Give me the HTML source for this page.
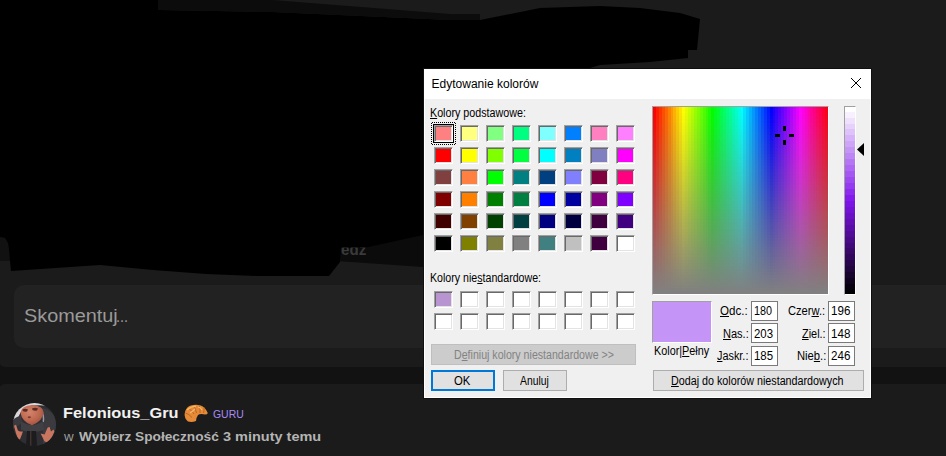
<!DOCTYPE html>
<html><head><meta charset="utf-8"><style>
html,body{margin:0;padding:0;}
body{width:946px;height:456px;overflow:hidden;position:relative;background:#121212;font-family:"Liberation Sans",sans-serif;}
.a{position:absolute;box-sizing:border-box;}
.t{position:absolute;white-space:pre;line-height:normal;}
u{text-decoration-thickness:1px;text-underline-offset:1px;}
.sw{position:absolute;width:17px;height:15px;border-style:solid;border-width:1px;border-color:#a0a0a0 #fff #fff #a0a0a0;box-shadow:inset 1px 1px 0 #696969,inset -1px -1px 0 #e3e3e3;}
.ed{position:absolute;box-sizing:border-box;width:27px;height:20px;border:1px solid #7a7a7a;background:#fff;}
.btn{position:absolute;box-sizing:border-box;height:21px;border:1px solid #adadad;background:#e1e1e1;}
</style></head><body>
<!-- web page -->
<div class="a" style="left:-1px;top:-20px;width:966px;height:387px;background:#1b1b1b;border-radius:6px"></div>
<div class="a" style="left:0;top:367px;width:946px;height:17px;background:#121212"></div>
<div class="a" style="left:-1px;top:384px;width:966px;height:100px;background:#1b1b1b;border-radius:6px"></div>
<div class="a" style="left:14px;top:285px;width:950px;height:63px;background:#222222;border-radius:10px"></div>

<svg class="a" style="left:0;top:0" width="946" height="456">
<polygon fill="#0b0b0b" points="338,246 423,232 423,267 337,261"/>
<polygon fill="#111" points="0,237 5,238 8,243 9,250 10,261 0,261"/>
</svg>
<div class="t" style="left:340.5px;top:240.37px;font-size:16.5px;color:#3a3a3a;font-weight:bold;transform:scaleX(0.9200);transform-origin:0 0;">edz</div>
<svg class="a" style="left:0;top:0" width="946" height="456">
<polygon fill="#000" points="0,0 158,0 158,10 272,12 450,20 480,20 540,8 600,6 640,8 680,13 700,19 697,50 688,50 688,58 650,62 600,65 590,68 423,68 423,235 366,247.6 341,247.6 340,262 329,276 258,276 206,274 153,270 100,265 11,271 10,261 9,250 8,243 5,238 0,237"/>
<polygon fill="#0c0c0c" points="158,0 272,0 450,14 480,14 480,20 450,20 272,12 158,10"/>
</svg>
<div class="t" style="left:23.6px;top:305.51px;font-size:18px;color:#9a9a9a;font-weight:normal;transform:scaleX(1.1024);transform-origin:0 0;">Skomentuj</div>
<div class="t" style="left:116.09px;top:307.52px;font-size:16px;color:#9a9a9a;font-weight:normal;transform:scaleX(0.9091);transform-origin:0 0;">...</div>
<div class="t" style="left:63.31px;top:403.93px;font-size:15px;color:#f2f2f2;font-weight:bold;transform:scaleX(1.0923);transform-origin:0 0;">Felonious_Gru</div>
<div class="t" style="left:213.21px;top:407.90px;font-size:10.5px;color:#a98cf8;font-weight:normal;transform:scaleX(0.9931);transform-origin:0 0;">GURU</div>
<div class="t" style="left:64.4px;top:428.58px;font-size:13.5px;color:#9d9d9d;font-weight:normal;transform:scaleX(0.9900);transform-origin:0 0;">w</div>
<div class="t" style="left:79.0px;top:428.58px;font-size:13.5px;color:#b4b4b4;font-weight:bold;transform:scaleX(1.0146);transform-origin:0 0;">Wybierz Społeczność</div>
<div class="t" style="left:222.53px;top:428.58px;font-size:13.5px;color:#b4b4b4;font-weight:bold;transform:scaleX(1.0733);transform-origin:0 0;">3 minuty temu</div>
<!-- user row -->
<svg class="a" style="left:13px;top:403px" width="43" height="43" viewBox="0 0 43 43">
<defs><clipPath id="cc"><circle cx="21.5" cy="21.5" r="21.5"/></clipPath>
<radialGradient id="hd" cx="0.4" cy="0.35" r="0.7"><stop offset="0" stop-color="#d2846a"/><stop offset="0.6" stop-color="#bf6850"/><stop offset="1" stop-color="#9a5040"/></radialGradient></defs>
<g clip-path="url(#cc)">
<rect width="43" height="43" fill="#2e2e33"/>
<path d="M0 0 L43 0 L43 4 Q32 1.5 19 2.5 Q9 3.5 5 15 L0 17Z" fill="#d8d8da"/>
<path d="M0 17 Q4 13 8 13 L9 20 L0 26Z" fill="#3a3a3f"/>
<path d="M30 5 Q40 8 43 16 L43 43 L30 43Z" fill="#3a3a3f"/>
<path d="M28.6 7 Q32 12 31 19 L29.5 19 Q30.5 12 27.5 8Z" fill="#9a9a9e"/>
<path d="M8 18 Q19 26 30 18 L31 27 Q19 31 8 27Z" fill="#3f3f44"/>
<path d="M14 28 L23 28 L24 43 L13 43Z" fill="#1c1c1f"/>
<path d="M17.8 28 L17.8 43" stroke="#6a4a40" stroke-width="0.7"/>
<path d="M7.4 9.5 Q8.5 2.5 19 2 Q30.6 2.5 30.6 9.5 Q30 18 19 22.2 Q9 19 7.4 9.5Z" fill="url(#hd)"/>
<path d="M9.5 6.5 Q12 5 15 6.5 L14 8.5 Q11.5 9 9.8 8Z" fill="#5a2a22"/>
<path d="M19 5.5 Q22 4 25 5.5 L24 7.5 Q21.5 8 19.5 7Z" fill="#5a2a22"/>
<ellipse cx="16.3" cy="14.3" rx="1.6" ry="1" fill="#7e3a2e"/>
<polygon points="1,22.7 3,21.7 4.9,27.6 6.9,28.6 9.9,28.6 8.9,31.6 6.9,36.5 4.9,35.5 3,30.6" fill="#c97560"/>
<polygon points="27.6,30.6 31.6,31.6 34.5,24.7 36.5,23.7 38,28.6 40.5,26.6 41.4,28.6 38.5,35.5 35.5,39.5 31.6,38.5" fill="#c97560"/>
</g></svg>

<svg class="a" style="left:184px;top:404px" width="24" height="18" viewBox="0 0 24 18">
<path d="M4 17.5 Q0.5 15 0.6 10 Q1.2 4 6 1.8 Q11 0.2 16 1.2 Q21 2.5 23.8 9 Q23.5 10.5 21 10.5 Q16 9.5 14 11 Q12.5 13 12 17 Q8 18.5 4 17.5Z" fill="#e48a38"/>
<path d="M1.5 9 Q5 10 8 13.5 M4 4 Q8 6.5 10 10 M9 1.5 Q12 4.5 12.5 9 M15 1.5 Q16.5 5 16 9 M20 3.5 Q20.5 6 19.5 9" stroke="#b8621f" stroke-width="0.9" fill="none"/>
<path d="M3 6 Q7 2.5 12 2.2 M6 9 Q9 7 11 5 M14 3 Q17 3.5 18 6" stroke="#f7b868" stroke-width="1.2" fill="none"/>
</svg>




<!-- dialog -->
<div class="a" style="left:423px;top:68px;width:449px;height:331px;border:1px solid #101010;background:#f0f0f0"></div>
<div class="a" style="left:424px;top:69px;width:447px;height:30px;background:#fff"></div>
<div class="a" style="left:424px;top:99px;width:1px;height:299px;background:#fff"></div>
<div class="a" style="left:870px;top:99px;width:1px;height:299px;background:#fff"></div>
<div class="a" style="left:424px;top:397px;width:447px;height:1px;background:#fff"></div>
<svg class="a" style="left:850px;top:77px" width="12" height="12"><path d="M1 1 L11 11 M11 1 L1 11" stroke="#000" stroke-width="1"/></svg>
<div class="sw" style="left:434px;top:125px;background:#FF8080"></div>
<div class="sw" style="left:460px;top:125px;background:#FFFF80"></div>
<div class="sw" style="left:486px;top:125px;background:#80FF80"></div>
<div class="sw" style="left:512px;top:125px;background:#00FF80"></div>
<div class="sw" style="left:538px;top:125px;background:#80FFFF"></div>
<div class="sw" style="left:564px;top:125px;background:#0080FF"></div>
<div class="sw" style="left:590px;top:125px;background:#FF80C0"></div>
<div class="sw" style="left:616px;top:125px;background:#FF80FF"></div>
<div class="sw" style="left:434px;top:147px;background:#FF0000"></div>
<div class="sw" style="left:460px;top:147px;background:#FFFF00"></div>
<div class="sw" style="left:486px;top:147px;background:#80FF00"></div>
<div class="sw" style="left:512px;top:147px;background:#00FF40"></div>
<div class="sw" style="left:538px;top:147px;background:#00FFFF"></div>
<div class="sw" style="left:564px;top:147px;background:#0080C0"></div>
<div class="sw" style="left:590px;top:147px;background:#8080C0"></div>
<div class="sw" style="left:616px;top:147px;background:#FF00FF"></div>
<div class="sw" style="left:434px;top:169px;background:#804040"></div>
<div class="sw" style="left:460px;top:169px;background:#FF8040"></div>
<div class="sw" style="left:486px;top:169px;background:#00FF00"></div>
<div class="sw" style="left:512px;top:169px;background:#008080"></div>
<div class="sw" style="left:538px;top:169px;background:#004080"></div>
<div class="sw" style="left:564px;top:169px;background:#8080FF"></div>
<div class="sw" style="left:590px;top:169px;background:#800040"></div>
<div class="sw" style="left:616px;top:169px;background:#FF0080"></div>
<div class="sw" style="left:434px;top:191px;background:#800000"></div>
<div class="sw" style="left:460px;top:191px;background:#FF8000"></div>
<div class="sw" style="left:486px;top:191px;background:#008000"></div>
<div class="sw" style="left:512px;top:191px;background:#008040"></div>
<div class="sw" style="left:538px;top:191px;background:#0000FF"></div>
<div class="sw" style="left:564px;top:191px;background:#0000A0"></div>
<div class="sw" style="left:590px;top:191px;background:#800080"></div>
<div class="sw" style="left:616px;top:191px;background:#8000FF"></div>
<div class="sw" style="left:434px;top:213px;background:#400000"></div>
<div class="sw" style="left:460px;top:213px;background:#804000"></div>
<div class="sw" style="left:486px;top:213px;background:#004000"></div>
<div class="sw" style="left:512px;top:213px;background:#004040"></div>
<div class="sw" style="left:538px;top:213px;background:#000080"></div>
<div class="sw" style="left:564px;top:213px;background:#000040"></div>
<div class="sw" style="left:590px;top:213px;background:#400040"></div>
<div class="sw" style="left:616px;top:213px;background:#400080"></div>
<div class="sw" style="left:434px;top:235px;background:#000000"></div>
<div class="sw" style="left:460px;top:235px;background:#808000"></div>
<div class="sw" style="left:486px;top:235px;background:#808040"></div>
<div class="sw" style="left:512px;top:235px;background:#808080"></div>
<div class="sw" style="left:538px;top:235px;background:#408080"></div>
<div class="sw" style="left:564px;top:235px;background:#C0C0C0"></div>
<div class="sw" style="left:590px;top:235px;background:#400040"></div>
<div class="sw" style="left:616px;top:235px;background:#FFFFFF"></div>
<div class="sw" style="left:434px;top:291px;background:#B894D0"></div>
<div class="sw" style="left:460px;top:291px;background:#FFFFFF"></div>
<div class="sw" style="left:486px;top:291px;background:#FFFFFF"></div>
<div class="sw" style="left:512px;top:291px;background:#FFFFFF"></div>
<div class="sw" style="left:538px;top:291px;background:#FFFFFF"></div>
<div class="sw" style="left:564px;top:291px;background:#FFFFFF"></div>
<div class="sw" style="left:590px;top:291px;background:#FFFFFF"></div>
<div class="sw" style="left:616px;top:291px;background:#FFFFFF"></div>
<div class="sw" style="left:434px;top:313px;background:#FFFFFF"></div>
<div class="sw" style="left:460px;top:313px;background:#FFFFFF"></div>
<div class="sw" style="left:486px;top:313px;background:#FFFFFF"></div>
<div class="sw" style="left:512px;top:313px;background:#FFFFFF"></div>
<div class="sw" style="left:538px;top:313px;background:#FFFFFF"></div>
<div class="sw" style="left:564px;top:313px;background:#FFFFFF"></div>
<div class="sw" style="left:590px;top:313px;background:#FFFFFF"></div>
<div class="sw" style="left:616px;top:313px;background:#FFFFFF"></div>
<div class="a" style="left:433px;top:124px;width:21px;height:19px;border:1px solid #000"></div>
<svg class="a" style="left:0;top:0" width="946" height="456" shape-rendering="crispEdges"><path fill="#000" d="M432 122h1v1h-1zM432 144h1v1h-1zM434 122h1v1h-1zM434 144h1v1h-1zM436 122h1v1h-1zM436 144h1v1h-1zM438 122h1v1h-1zM438 144h1v1h-1zM440 122h1v1h-1zM440 144h1v1h-1zM442 122h1v1h-1zM442 144h1v1h-1zM444 122h1v1h-1zM444 144h1v1h-1zM446 122h1v1h-1zM446 144h1v1h-1zM448 122h1v1h-1zM448 144h1v1h-1zM450 122h1v1h-1zM450 144h1v1h-1zM452 122h1v1h-1zM452 144h1v1h-1zM454 122h1v1h-1zM454 144h1v1h-1zM431 123h1v1h-1zM455 123h1v1h-1zM431 125h1v1h-1zM455 125h1v1h-1zM431 127h1v1h-1zM455 127h1v1h-1zM431 129h1v1h-1zM455 129h1v1h-1zM431 131h1v1h-1zM455 131h1v1h-1zM431 133h1v1h-1zM455 133h1v1h-1zM431 135h1v1h-1zM455 135h1v1h-1zM431 137h1v1h-1zM455 137h1v1h-1zM431 139h1v1h-1zM455 139h1v1h-1zM431 141h1v1h-1zM455 141h1v1h-1zM431 143h1v1h-1zM455 143h1v1h-1z"/></svg>
<!-- spectrum -->
<div class="a" style="left:652px;top:106px;width:177px;height:189px;border-style:solid;border-width:1px;border-color:#a0a0a0 #fff #fff #a0a0a0;background:linear-gradient(to bottom,rgba(128,128,128,0.000) 0.000%,rgba(128,128,128,0.000) 1.667%,rgba(128,128,128,0.017) 1.667%,rgba(128,128,128,0.017) 3.333%,rgba(128,128,128,0.034) 3.333%,rgba(128,128,128,0.034) 5.000%,rgba(128,128,128,0.051) 5.000%,rgba(128,128,128,0.051) 6.667%,rgba(128,128,128,0.068) 6.667%,rgba(128,128,128,0.068) 8.333%,rgba(128,128,128,0.085) 8.333%,rgba(128,128,128,0.085) 10.000%,rgba(128,128,128,0.102) 10.000%,rgba(128,128,128,0.102) 11.667%,rgba(128,128,128,0.119) 11.667%,rgba(128,128,128,0.119) 13.333%,rgba(128,128,128,0.136) 13.333%,rgba(128,128,128,0.136) 15.000%,rgba(128,128,128,0.153) 15.000%,rgba(128,128,128,0.153) 16.667%,rgba(128,128,128,0.169) 16.667%,rgba(128,128,128,0.169) 18.333%,rgba(128,128,128,0.186) 18.333%,rgba(128,128,128,0.186) 20.000%,rgba(128,128,128,0.203) 20.000%,rgba(128,128,128,0.203) 21.667%,rgba(128,128,128,0.220) 21.667%,rgba(128,128,128,0.220) 23.333%,rgba(128,128,128,0.237) 23.333%,rgba(128,128,128,0.237) 25.000%,rgba(128,128,128,0.254) 25.000%,rgba(128,128,128,0.254) 26.667%,rgba(128,128,128,0.271) 26.667%,rgba(128,128,128,0.271) 28.333%,rgba(128,128,128,0.288) 28.333%,rgba(128,128,128,0.288) 30.000%,rgba(128,128,128,0.305) 30.000%,rgba(128,128,128,0.305) 31.667%,rgba(128,128,128,0.322) 31.667%,rgba(128,128,128,0.322) 33.333%,rgba(128,128,128,0.339) 33.333%,rgba(128,128,128,0.339) 35.000%,rgba(128,128,128,0.356) 35.000%,rgba(128,128,128,0.356) 36.667%,rgba(128,128,128,0.373) 36.667%,rgba(128,128,128,0.373) 38.333%,rgba(128,128,128,0.390) 38.333%,rgba(128,128,128,0.390) 40.000%,rgba(128,128,128,0.407) 40.000%,rgba(128,128,128,0.407) 41.667%,rgba(128,128,128,0.424) 41.667%,rgba(128,128,128,0.424) 43.333%,rgba(128,128,128,0.441) 43.333%,rgba(128,128,128,0.441) 45.000%,rgba(128,128,128,0.458) 45.000%,rgba(128,128,128,0.458) 46.667%,rgba(128,128,128,0.475) 46.667%,rgba(128,128,128,0.475) 48.333%,rgba(128,128,128,0.492) 48.333%,rgba(128,128,128,0.492) 50.000%,rgba(128,128,128,0.508) 50.000%,rgba(128,128,128,0.508) 51.667%,rgba(128,128,128,0.525) 51.667%,rgba(128,128,128,0.525) 53.333%,rgba(128,128,128,0.542) 53.333%,rgba(128,128,128,0.542) 55.000%,rgba(128,128,128,0.559) 55.000%,rgba(128,128,128,0.559) 56.667%,rgba(128,128,128,0.576) 56.667%,rgba(128,128,128,0.576) 58.333%,rgba(128,128,128,0.593) 58.333%,rgba(128,128,128,0.593) 60.000%,rgba(128,128,128,0.610) 60.000%,rgba(128,128,128,0.610) 61.667%,rgba(128,128,128,0.627) 61.667%,rgba(128,128,128,0.627) 63.333%,rgba(128,128,128,0.644) 63.333%,rgba(128,128,128,0.644) 65.000%,rgba(128,128,128,0.661) 65.000%,rgba(128,128,128,0.661) 66.667%,rgba(128,128,128,0.678) 66.667%,rgba(128,128,128,0.678) 68.333%,rgba(128,128,128,0.695) 68.333%,rgba(128,128,128,0.695) 70.000%,rgba(128,128,128,0.712) 70.000%,rgba(128,128,128,0.712) 71.667%,rgba(128,128,128,0.729) 71.667%,rgba(128,128,128,0.729) 73.333%,rgba(128,128,128,0.746) 73.333%,rgba(128,128,128,0.746) 75.000%,rgba(128,128,128,0.763) 75.000%,rgba(128,128,128,0.763) 76.667%,rgba(128,128,128,0.780) 76.667%,rgba(128,128,128,0.780) 78.333%,rgba(128,128,128,0.797) 78.333%,rgba(128,128,128,0.797) 80.000%,rgba(128,128,128,0.814) 80.000%,rgba(128,128,128,0.814) 81.667%,rgba(128,128,128,0.831) 81.667%,rgba(128,128,128,0.831) 83.333%,rgba(128,128,128,0.847) 83.333%,rgba(128,128,128,0.847) 85.000%,rgba(128,128,128,0.864) 85.000%,rgba(128,128,128,0.864) 86.667%,rgba(128,128,128,0.881) 86.667%,rgba(128,128,128,0.881) 88.333%,rgba(128,128,128,0.898) 88.333%,rgba(128,128,128,0.898) 90.000%,rgba(128,128,128,0.915) 90.000%,rgba(128,128,128,0.915) 91.667%,rgba(128,128,128,0.932) 91.667%,rgba(128,128,128,0.932) 93.333%,rgba(128,128,128,0.949) 93.333%,rgba(128,128,128,0.949) 95.000%,rgba(128,128,128,0.966) 95.000%,rgba(128,128,128,0.966) 96.667%,rgba(128,128,128,0.983) 96.667%,rgba(128,128,128,0.983) 98.333%,rgba(128,128,128,1.000) 98.333%,rgba(128,128,128,1.000) 100.000%),linear-gradient(to right,#ff0000 0.000%,#ff0000 1.667%,#ff1a00 1.667%,#ff1a00 3.333%,#ff3300 3.333%,#ff3300 5.000%,#ff4d00 5.000%,#ff4d00 6.667%,#ff6600 6.667%,#ff6600 8.333%,#ff8000 8.333%,#ff8000 10.000%,#ff9900 10.000%,#ff9900 11.667%,#ffb200 11.667%,#ffb200 13.333%,#ffcc00 13.333%,#ffcc00 15.000%,#ffe500 15.000%,#ffe500 16.667%,#ffff00 16.667%,#ffff00 18.333%,#e6ff00 18.333%,#e6ff00 20.000%,#ccff00 20.000%,#ccff00 21.667%,#b2ff00 21.667%,#b2ff00 23.333%,#99ff00 23.333%,#99ff00 25.000%,#80ff00 25.000%,#80ff00 26.667%,#66ff00 26.667%,#66ff00 28.333%,#4cff00 28.333%,#4cff00 30.000%,#33ff00 30.000%,#33ff00 31.667%,#1aff00 31.667%,#1aff00 33.333%,#00ff00 33.333%,#00ff00 35.000%,#00ff19 35.000%,#00ff19 36.667%,#00ff33 36.667%,#00ff33 38.333%,#00ff4d 38.333%,#00ff4d 40.000%,#00ff66 40.000%,#00ff66 41.667%,#00ff80 41.667%,#00ff80 43.333%,#00ff99 43.333%,#00ff99 45.000%,#00ffb3 45.000%,#00ffb3 46.667%,#00ffcc 46.667%,#00ffcc 48.333%,#00ffe6 48.333%,#00ffe6 50.000%,#00ffff 50.000%,#00ffff 51.667%,#00e5ff 51.667%,#00e5ff 53.333%,#00ccff 53.333%,#00ccff 55.000%,#00b2ff 55.000%,#00b2ff 56.667%,#0099ff 56.667%,#0099ff 58.333%,#007fff 58.333%,#007fff 60.000%,#0066ff 60.000%,#0066ff 61.667%,#004cff 61.667%,#004cff 63.333%,#0033ff 63.333%,#0033ff 65.000%,#0019ff 65.000%,#0019ff 66.667%,#0000ff 66.667%,#0000ff 68.333%,#1900ff 68.333%,#1900ff 70.000%,#3300ff 70.000%,#3300ff 71.667%,#4d00ff 71.667%,#4d00ff 73.333%,#6600ff 73.333%,#6600ff 75.000%,#7f00ff 75.000%,#7f00ff 76.667%,#9900ff 76.667%,#9900ff 78.333%,#b300ff 78.333%,#b300ff 80.000%,#cc00ff 80.000%,#cc00ff 81.667%,#e500ff 81.667%,#e500ff 83.333%,#ff00ff 83.333%,#ff00ff 85.000%,#ff00e6 85.000%,#ff00e6 86.667%,#ff00cc 86.667%,#ff00cc 88.333%,#ff00b2 88.333%,#ff00b2 90.000%,#ff0099 90.000%,#ff0099 91.667%,#ff0080 91.667%,#ff0080 93.333%,#ff0066 93.333%,#ff0066 95.000%,#ff004c 95.000%,#ff004c 96.667%,#ff0033 96.667%,#ff0033 98.333%,#ff001a 98.333%,#ff001a 100.000%)"></div>
<div class="a" style="left:775px;top:134px;width:5px;height:3px;background:#000"></div>
<div class="a" style="left:789px;top:134px;width:5px;height:3px;background:#000"></div>
<div class="a" style="left:783px;top:126px;width:3px;height:5px;background:#000"></div>
<div class="a" style="left:783px;top:140px;width:3px;height:5px;background:#000"></div>
<div class="a" style="left:844px;top:106px;width:12px;height:189px;border-style:solid;border-width:1px;border-color:#a0a0a0 #fff #fff #a0a0a0;background:linear-gradient(to bottom,#ffffff 0.000%,#ffffff 2.460%,#f7f0fe 2.460%,#f7f0fe 5.642%,#efe1fc 5.642%,#efe1fc 8.824%,#e6d1fb 8.824%,#e6d1fb 12.005%,#dec2fa 12.005%,#dec2fa 15.187%,#d6b3f9 15.187%,#d6b3f9 18.369%,#cea4f7 18.369%,#cea4f7 21.551%,#c595f6 21.551%,#c595f6 24.733%,#bd86f5 24.733%,#bd86f5 27.914%,#b576f4 27.914%,#b576f4 31.096%,#ad67f2 31.096%,#ad67f2 34.278%,#a558f1 34.278%,#a558f1 37.460%,#9c49f0 37.460%,#9c49f0 40.642%,#943aef 40.642%,#943aef 43.824%,#8c2aed 43.824%,#8c2aed 47.005%,#841bec 47.005%,#841bec 50.187%,#7b13e4 50.187%,#7b13e4 53.369%,#7312d5 53.369%,#7312d5 56.551%,#6b10c5 56.551%,#6b10c5 59.733%,#630fb6 59.733%,#630fb6 62.914%,#5a0ea7 62.914%,#5a0ea7 66.096%,#520d98 66.096%,#520d98 69.278%,#4a0b89 69.278%,#4a0b89 72.460%,#420a79 72.460%,#420a79 75.642%,#3a096a 75.642%,#3a096a 78.824%,#31085b 78.824%,#31085b 82.005%,#29064c 82.005%,#29064c 85.187%,#21053d 85.187%,#21053d 88.369%,#19042e 88.369%,#19042e 91.551%,#10031e 91.551%,#10031e 94.733%,#08010f 94.733%,#08010f 97.914%,#000000 97.914%,#000000 100.000%)"></div>
<svg class="a" style="left:856px;top:142px" width="10" height="16"><polygon points="1,7.5 8,1 8,14" fill="#000"/></svg>
<!-- preview -->
<div class="a" style="left:652px;top:301px;width:60px;height:42px;border-style:solid;border-width:1px;border-color:#a0a0a0 #fff #fff #a0a0a0;background:#c494f6"></div>
<div class="ed" style="left:751px;top:301px"></div>
<div class="ed" style="left:751px;top:323px"></div>
<div class="ed" style="left:751px;top:346px"></div>
<div class="ed" style="left:828px;top:301px"></div>
<div class="ed" style="left:828px;top:323px"></div>
<div class="ed" style="left:828px;top:346px"></div>
<!-- buttons -->
<div class="btn" style="left:431px;top:344px;width:205px;background:#cccccc;border-color:#bfbfbf"></div>
<div class="btn" style="left:431px;top:370px;width:64px;border:2px solid #0078d7"></div>
<div class="btn" style="left:503px;top:370px;width:64px"></div>
<div class="btn" style="left:653px;top:370px;width:211px"></div>
<div class="t" style="left:431.6px;top:76.54px;font-size:12px;color:#000;font-weight:normal;transform:scaleX(1.0000);transform-origin:0 0;">Edytowanie kolorów</div>
<div class="t" style="left:429.51px;top:106.14px;font-size:12px;color:#000;font-weight:normal;transform:scaleX(0.8933);transform-origin:0 0;"><u>K</u>olory podstawowe:</div>
<div class="t" style="left:429.51px;top:271.14px;font-size:12px;color:#000;font-weight:normal;transform:scaleX(0.8854);transform-origin:0 0;">Kolory nie<u>s</u>tandardowe:</div>
<div class="t" style="left:453.52px;top:348.14px;font-size:12px;color:#838383;font-weight:normal;transform:scaleX(0.8844);transform-origin:0 0;">D<u>e</u>finiuj kolory niestandardowe &gt;&gt;</div>
<div class="t" style="left:453.56px;top:373.64px;font-size:12px;color:#000;font-weight:normal;transform:scaleX(0.9438);transform-origin:0 0;">OK</div>
<div class="t" style="left:520.0px;top:374.04px;font-size:12px;color:#000;font-weight:normal;transform:scaleX(0.8636);transform-origin:0 0;">Anuluj</div>
<div class="t" style="left:653.5px;top:343.84px;font-size:12px;color:#000;font-weight:normal;transform:scaleX(0.9017);transform-origin:0 0;">Kolor|<u>P</u>ełny</div>
<div class="t" style="left:671.21px;top:373.94px;font-size:12px;color:#000;font-weight:normal;transform:scaleX(0.8948);transform-origin:0 0;"><u>D</u>odaj do kolorów niestandardowych</div>
<div class="t" style="left:720.44px;top:304.14px;font-size:12px;color:#000;font-weight:normal;transform:scaleX(0.9630);transform-origin:0 0;"><u>O</u>dc.:</div>
<div class="t" style="left:722.58px;top:327.14px;font-size:12px;color:#000;font-weight:normal;transform:scaleX(0.9192);transform-origin:0 0;"><u>N</u>as.:</div>
<div class="t" style="left:716.6px;top:349.14px;font-size:12px;color:#000;font-weight:normal;transform:scaleX(0.9059);transform-origin:0 0;"><u>J</u>askr.:</div>
<div class="t" style="left:788.47px;top:304.14px;font-size:12px;color:#000;font-weight:normal;transform:scaleX(0.9263);transform-origin:0 0;">Czer<u>w</u>.:</div>
<div class="t" style="left:801.9px;top:327.14px;font-size:12px;color:#000;font-weight:normal;transform:scaleX(0.9080);transform-origin:0 0;"><u>Z</u>iel.:</div>
<div class="t" style="left:796.57px;top:349.14px;font-size:12px;color:#000;font-weight:normal;transform:scaleX(0.9345);transform-origin:0 0;">Nie<u>b</u>.:</div>
<div class="t" style="left:753.9px;top:304.14px;font-size:12px;color:#000;font-weight:normal;transform:scaleX(0.9000);transform-origin:0 0;">180</div>
<div class="t" style="left:753.85px;top:327.14px;font-size:12px;color:#000;font-weight:normal;transform:scaleX(0.9500);transform-origin:0 0;">203</div>
<div class="t" style="left:753.85px;top:349.14px;font-size:12px;color:#000;font-weight:normal;transform:scaleX(0.9500);transform-origin:0 0;">185</div>
<div class="t" style="left:830.83px;top:304.14px;font-size:12px;color:#000;font-weight:normal;transform:scaleX(0.9667);transform-origin:0 0;">196</div>
<div class="t" style="left:830.83px;top:327.14px;font-size:12px;color:#000;font-weight:normal;transform:scaleX(0.9667);transform-origin:0 0;">148</div>
<div class="t" style="left:830.83px;top:349.14px;font-size:12px;color:#000;font-weight:normal;transform:scaleX(0.9667);transform-origin:0 0;">246</div>
</body></html>
